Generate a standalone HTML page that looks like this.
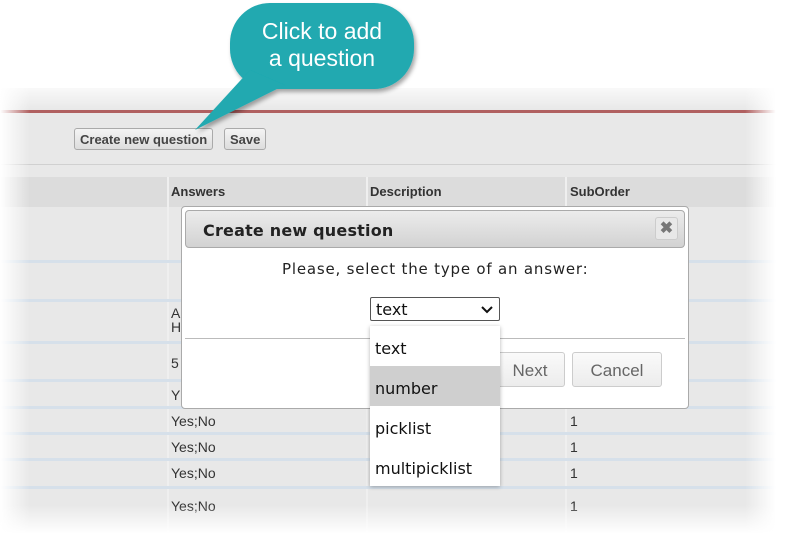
<!DOCTYPE html>
<html><head><style>
*{margin:0;padding:0;box-sizing:border-box}
body{width:789px;height:541px;overflow:hidden;background:#fff;font-family:"Liberation Sans",Arial,sans-serif;position:relative}
.a{position:absolute}
.pg{left:0;top:88px;width:789px;height:453px;background:#e8e8e8}
.btn{border:1px solid #aaa;border-radius:3px;background:linear-gradient(#f4f4f4,#ddd);font-size:13px;color:#444;font-weight:bold;padding:3px 5px;height:22px}
.hl{height:3px;background:#d6e0ea;left:0;width:789px}
.cell{font-size:14px;color:#333}
.fade{pointer-events:none}
.hd{font-size:13px;font-weight:bold;color:#333}
</style></head><body>
<div class="a pg"></div>
<div class="a" style="left:0;top:110px;width:789px;height:3px;background:#b06060"></div>
<div class="a btn" style="left:74px;top:128px">Create new question</div>
<div class="a btn" style="left:224px;top:128px">Save</div>
<div class="a" style="left:0;top:164px;width:789px;height:1px;background:#d0d0d0"></div>
<div class="a" style="left:0;top:177px;width:789px;height:30px;background:#dcdcdc"></div>
<div class="a" style="left:167px;top:177px;width:2px;height:364px;background:#efefef"></div>
<div class="a" style="left:366px;top:177px;width:2px;height:364px;background:#efefef"></div>
<div class="a" style="left:565px;top:177px;width:2px;height:364px;background:#efefef"></div>
<div class="a hd" style="left:171px;top:184px">Answers</div>
<div class="a hd" style="left:370px;top:184px">Description</div>
<div class="a hd" style="left:570px;top:184px">SubOrder</div>
<div class="a hl" style="top:260px"></div>
<div class="a hl" style="top:299px"></div>
<div class="a hl" style="top:341px"></div>
<div class="a hl" style="top:379px"></div>
<div class="a hl" style="top:406px"></div>
<div class="a hl" style="top:432px"></div>
<div class="a hl" style="top:458px"></div>
<div class="a hl" style="top:486px"></div>
<div class="a cell" style="left:171px;top:306px;line-height:14px">A<br>H</div>
<div class="a cell" style="left:171px;top:355px">5</div>
<div class="a cell" style="left:171px;top:387px">Y</div>
<div class="a cell" style="left:171px;top:413px">Yes;No</div><div class="a cell" style="left:570px;top:413px">1</div>
<div class="a cell" style="left:171px;top:439px">Yes;No</div><div class="a cell" style="left:570px;top:439px">1</div>
<div class="a cell" style="left:171px;top:465px">Yes;No</div><div class="a cell" style="left:570px;top:465px">1</div>
<div class="a cell" style="left:171px;top:498px">Yes;No</div><div class="a cell" style="left:570px;top:498px">1</div>
<!-- dialog -->
<div class="a" style="left:181px;top:206px;width:508px;height:203px;background:#fff;border:1px solid #aaa;border-radius:4px"></div>
<div class="a" style="left:185px;top:210px;width:500px;height:38px;background:linear-gradient(#ececec,#d2d2d2);border:1px solid #aaa;border-radius:4px"></div>
<div class="a" style="left:203px;top:221px;font-size:16px;font-weight:bold;color:#222;font-family:'DejaVu Sans',sans-serif;letter-spacing:.2px">Create new question</div>
<div class="a" style="left:655px;top:217px;width:23px;height:23px;background:#e8e8e8;border:1px solid #ccc;border-radius:3px;color:#777;font-size:16px;font-weight:bold;text-align:center;line-height:21px">✖</div>
<div class="a" style="left:282px;top:260px;font-size:15px;color:#222;font-family:'DejaVu Sans',sans-serif;letter-spacing:.8px">Please, select the type of an answer:</div>
<div class="a" style="left:370px;top:297px;width:130px;height:24px;border:1px solid #555;border-radius:2px;font-size:16px;color:#111;padding:2px 5px;font-family:'DejaVu Sans',sans-serif">text
<svg class="a" style="right:6px;top:8px" width="12" height="8"><path d="M1 1 L6 6 L11 1" fill="none" stroke="#111" stroke-width="2"/></svg></div>
<div class="a" style="left:185px;top:338px;width:500px;height:1px;background:#bbb"></div>
<div class="a" style="left:495px;top:352px;width:70px;height:35px;border:1px solid #ccc;border-radius:3px;background:linear-gradient(#fafafa,#ececec);font-size:17px;color:#666;text-align:center;line-height:35px">Next</div>
<div class="a" style="left:572px;top:352px;width:90px;height:35px;border:1px solid #ccc;border-radius:3px;background:linear-gradient(#fafafa,#ececec);font-size:17px;color:#666;text-align:center;line-height:35px">Cancel</div>
<div class="a" style="left:370px;top:326px;width:130px;height:160px;background:#fff;box-shadow:0 1px 4px rgba(0,0,0,.3);font-size:16px;color:#111;font-family:'DejaVu Sans',sans-serif">
<div style="height:40px;line-height:45px;padding-left:5px">text</div>
<div style="height:40px;line-height:45px;padding-left:5px;background:#cfcfcf">number</div>
<div style="height:40px;line-height:45px;padding-left:5px">picklist</div>
<div style="height:40px;line-height:45px;padding-left:5px">multipicklist</div>
</div>
<!-- fades -->
<div class="a fade" style="left:0;top:80px;width:789px;height:30px;background:linear-gradient(#fff,rgba(255,255,255,0))"></div>
<div class="a fade" style="left:0;top:80px;width:30px;height:461px;background:linear-gradient(90deg,#fff,rgba(255,255,255,0))"></div>
<div class="a fade" style="left:745px;top:80px;width:44px;height:461px;background:linear-gradient(90deg,rgba(255,255,255,0),#fff 70%)"></div>
<div class="a fade" style="left:0;top:505px;width:789px;height:36px;background:linear-gradient(rgba(255,255,255,0),#fff 80%)"></div>
<!-- callout -->
<svg class="a" style="left:0;top:0" width="789" height="160">
<defs><filter id="s"><feDropShadow dx="2" dy="3" stdDeviation="2" flood-opacity=".35"/></filter></defs>
<g filter="url(#s)" fill="#20a9b0">
<rect x="230" y="3" width="184" height="86" rx="40"/>
<path d="M250 70 L195 130 L285 85 Z"/>
</g>
</svg>
<div class="a" style="left:230px;top:18px;width:184px;text-align:center;color:#fff;font-size:23px;line-height:27px">Click to add<br>a question</div>
</body></html>
